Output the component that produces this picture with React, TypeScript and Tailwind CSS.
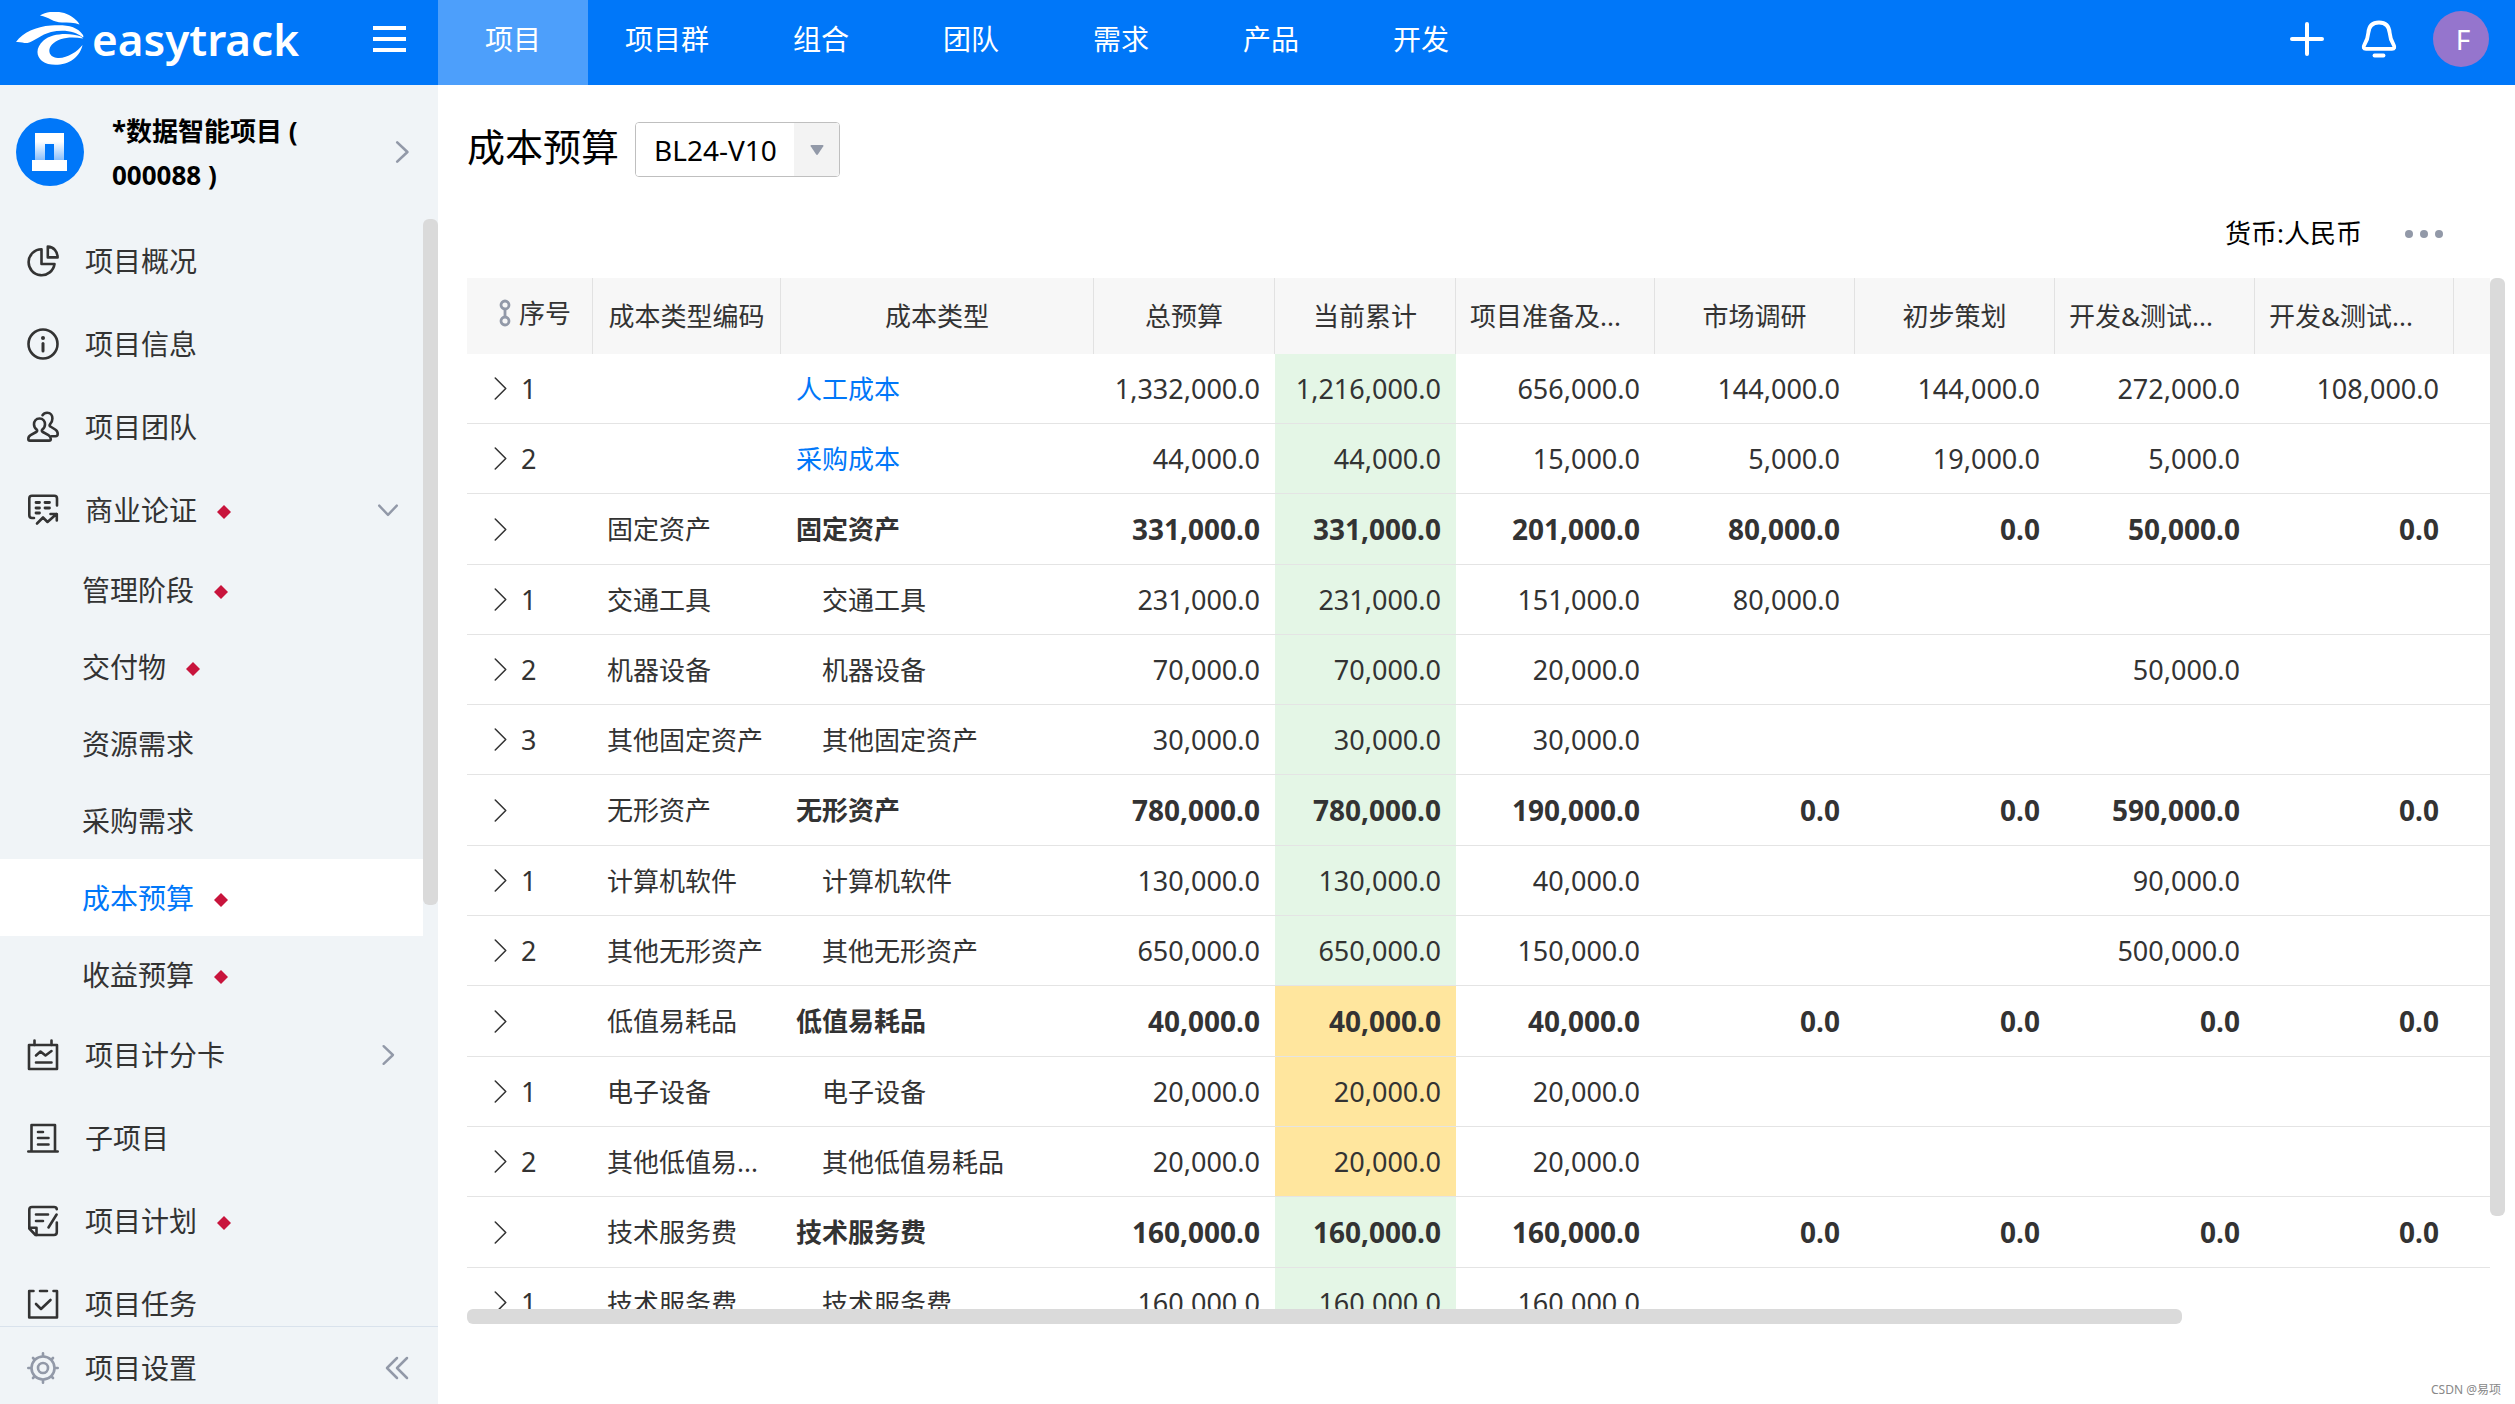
import { useId, type ReactNode } from "react";

const topTabs = ["项目", "项目群", "组合", "团队", "需求", "产品", "开发"];

type NavItem = {
  label: string;
  icon: ReactNode;
  mark?: boolean;
  chevron?: "down" | "right";
  children?: { label: string; mark?: boolean; active?: boolean }[];
};

function Icon({ children }: { children: ReactNode }) {
  return (
    <svg
      viewBox="0 0 32 32"
      className="size-8 shrink-0"
      fill="none"
      stroke="currentColor"
      strokeWidth="2.6"
      strokeLinecap="round"
      strokeLinejoin="round"
      aria-hidden="true"
    >
      {children}
    </svg>
  );
}

const icons = {
  pie: (
    <Icon>
      <path d="M14.500 4.200V19H27.500A13 13 0 1 1 14.500 4.200Z" />
      <path d="M20.800 1.600V12.400H30.600C30.600 6.500 26.600 1.600 20.800 1.600Z" />
    </Icon>
  ),
  info: (
    <Icon>
      <circle cx="16" cy="16" r="14.500" />
      <path d="M16 15.500V23" strokeWidth="3" />
      <circle cx="16" cy="10" r="2" fill="currentColor" stroke="none" />
    </Icon>
  ),
  team: (
    <Icon>
      <path d="M12.500 7.500C8.800 7.500 7 10.300 7 13.200C7 15.600 8 17.200 9.600 18.400C10.600 19.200 10.300 20.400 9.200 21L3.600 24.200C2 25.100 1.300 26.300 1.300 28C1.300 29 1.900 29.600 2.900 29.600H22.200C23.200 29.600 23.800 29 23.800 28C23.800 26.300 23 25.100 21.500 24.200L15.800 21C14.700 20.400 14.400 19.200 15.400 18.400C17 17.200 18 15.600 18 13.200C18 10.300 16.200 7.500 12.500 7.500Z" />
      <path d="M15.500 4.200C16.600 2.500 18.200 1.800 20.100 1.800C23.800 1.800 25.400 4.600 25.400 7.500C25.400 9.900 24.700 11.300 23.300 12.800C22.300 14 22.300 14.900 23.400 15.500L28.200 18.500C29.900 19.600 30.700 20.900 30.700 22.700C30.700 24.300 30 25.200 28.500 25.200H24.500" />
    </Icon>
  ),
  business: (
    <Icon>
      <path d="M30 11.500V4.500Q30 1.800 27.300 1.800H5Q2.300 1.800 2.300 4.500V21.300Q2.300 24 5 24H7" />
      <path d="M9 8.500H12.500M18 8.500H22.500M9 14H12.500M18 14H22.500M9 19H12.500" strokeWidth="2.800" />
      <path d="M10 29.500L16 23.500L20.500 28L29.500 20M23.500 20H29.800V26.500" />
    </Icon>
  ),
  score: (
    <Icon>
      <rect x="2" y="6" width="28" height="24" />
      <path d="M7.500 1.500V6M24.500 1.500V6M9 16.500L13.500 12.500L18.500 16.500L24.500 12M9 23.500H24.500" />
    </Icon>
  ),
  sub: (
    <Icon>
      <path d="M4.500 29V3H28V29M1.300 29.500H30.700" />
      <path d="M11 10H16M11 16H21.500M11 22.500H21.500" />
    </Icon>
  ),
  plan: (
    <Icon>
      <path d="M29.800 4.200Q29.500 2 27 2H5Q2.300 2 2.300 4.700V23.500L8.500 30H27Q29.800 30 29.800 27.300V17.500" />
      <path d="M2.300 22.800H9.500V30" />
      <path d="M9 9.500H21M9 16H16M29.600 9.500L21.500 22.500" />
    </Icon>
  ),
  task: (
    <Icon>
      <path d="M6.500 3H2.200V29.500H30V3H26.500M13 3H20" />
      <path d="M9 16L14 21L23.500 12" />
    </Icon>
  ),
};

const navItems: NavItem[] = [
  { label: "项目概况", icon: icons.pie },
  { label: "项目信息", icon: icons.info },
  { label: "项目团队", icon: icons.team },
  {
    label: "商业论证",
    icon: icons.business,
    mark: true,
    chevron: "down",
    children: [
      { label: "管理阶段", mark: true },
      { label: "交付物", mark: true },
      { label: "资源需求" },
      { label: "采购需求" },
      { label: "成本预算", mark: true, active: true },
      { label: "收益预算", mark: true },
    ],
  },
  { label: "项目计分卡", icon: icons.score, chevron: "right" },
  { label: "子项目", icon: icons.sub },
  { label: "项目计划", icon: icons.plan, mark: true },
  { label: "项目任务", icon: icons.task },
];

const columns = ["总预算", "当前累计", "项目准备及...", "市场调研", "初步策划", "开发&测试...", "开发&测试..."];

type Row = {
  kind: "link" | "group" | "item";
  no: string;
  code: string;
  name: string;
  tone?: "warn";
  values: string[];
};

const rows: Row[] = [
  { kind: "link", no: "1", code: "", name: "人工成本", values: ["1,332,000.0", "1,216,000.0", "656,000.0", "144,000.0", "144,000.0", "272,000.0", "108,000.0"] },
  { kind: "link", no: "2", code: "", name: "采购成本", values: ["44,000.0", "44,000.0", "15,000.0", "5,000.0", "19,000.0", "5,000.0", ""] },
  { kind: "group", no: "", code: "固定资产", name: "固定资产", values: ["331,000.0", "331,000.0", "201,000.0", "80,000.0", "0.0", "50,000.0", "0.0"] },
  { kind: "item", no: "1", code: "交通工具", name: "交通工具", values: ["231,000.0", "231,000.0", "151,000.0", "80,000.0", "", "", ""] },
  { kind: "item", no: "2", code: "机器设备", name: "机器设备", values: ["70,000.0", "70,000.0", "20,000.0", "", "", "50,000.0", ""] },
  { kind: "item", no: "3", code: "其他固定资产", name: "其他固定资产", values: ["30,000.0", "30,000.0", "30,000.0", "", "", "", ""] },
  { kind: "group", no: "", code: "无形资产", name: "无形资产", values: ["780,000.0", "780,000.0", "190,000.0", "0.0", "0.0", "590,000.0", "0.0"] },
  { kind: "item", no: "1", code: "计算机软件", name: "计算机软件", values: ["130,000.0", "130,000.0", "40,000.0", "", "", "90,000.0", ""] },
  { kind: "item", no: "2", code: "其他无形资产", name: "其他无形资产", values: ["650,000.0", "650,000.0", "150,000.0", "", "", "500,000.0", ""] },
  { kind: "group", no: "", code: "低值易耗品", name: "低值易耗品", tone: "warn", values: ["40,000.0", "40,000.0", "40,000.0", "0.0", "0.0", "0.0", "0.0"] },
  { kind: "item", no: "1", code: "电子设备", name: "电子设备", tone: "warn", values: ["20,000.0", "20,000.0", "20,000.0", "", "", "", ""] },
  { kind: "item", no: "2", code: "其他低值易...", name: "其他低值易耗品", tone: "warn", values: ["20,000.0", "20,000.0", "20,000.0", "", "", "", ""] },
  { kind: "group", no: "", code: "技术服务费", name: "技术服务费", values: ["160,000.0", "160,000.0", "160,000.0", "0.0", "0.0", "0.0", "0.0"] },
  { kind: "item", no: "1", code: "技术服务费", name: "技术服务费", values: ["160,000.0", "160,000.0", "160,000.0", "", "", "", ""] },
];

function Diamond() {
  return (
    <svg viewBox="0 0 14 14" className="mt-1 ml-5 size-3.5 shrink-0" aria-hidden="true">
      <path d="M7 0L14 7L7 14L0 7Z" fill="#c8143c" />
    </svg>
  );
}

function Chevron({ dir, className }: { dir: "down" | "right" | "row"; className: string }) {
  const d = { down: "M2 6L10 14.500L18 6", right: "M6 2L14.500 10L6 18", row: "M5 0L15 10L5 20" }[dir];
  return (
    <svg
      viewBox="0 0 20 20"
      className={className}
      fill="none"
      stroke="currentColor"
      strokeWidth={dir === "row" ? 1.5 : 2.2}
      strokeLinecap="round"
      strokeLinejoin="round"
      overflow="visible"
      aria-hidden="true"
    >
      <path d={d} />
    </svg>
  );
}

function Logo() {
  return (
    <a href="#home" aria-label="easytrack" className="flex items-center gap-2 text-white">
      <svg viewBox="0 0 68 54" className="h-[54px] w-[68px]" fill="currentColor" aria-hidden="true">
        <path d="M24 3.500C32 -1.500 44 -1.500 53 3C59 6.500 62 9.500 63.500 12.500C58 10.500 52 10.500 46 10.500C37 10.500 33 5 24 3.500Z" />
        <path d="M0 30C7 20.500 20 14.500 35 13.500C50 12.500 61 14 67 23C67.500 24.500 67.500 25 67 25.500C60 19 47 17 35 20C25 22.500 18 29.500 11.500 31C8 31.500 5 29.500 0 30Z" />
        <path d="M65 24.500C54 20.500 36 21 27.500 28.500C20 35 19.500 44 26 49C34 55 49 53.500 57 47.500C62.500 43.500 65.500 38 66.500 33C61.500 39.500 51 46.500 42 46C33 45.500 31 38 36 32.500C42 26 54 24 67 26.500Z" />
      </svg>
      <span className="font-['Noto_Sans'] text-[44px] leading-[50px] font-semibold">easytrack</span>
    </a>
  );
}

function TopBar() {
  return (
    <header className="flex h-[85px] shrink-0 bg-[#0077f9] text-white">
      <div className="flex w-[438px] shrink-0 items-center justify-between pr-8 pb-2 pl-4">
        <Logo />
        <button type="button" aria-label="菜单" className="flex w-[33px] flex-col gap-[7px]">
          <span className="h-1 w-full bg-white" />
          <span className="h-1 w-full bg-white" />
          <span className="h-1 w-full bg-white" />
        </button>
      </div>
      <nav className="flex flex-1">
        {topTabs.map((t, i) => (
          <a
            key={t}
            href={`#tab-${i}`}
            className={`flex min-w-[150px] items-center justify-center px-[37px] pb-2 text-[28px] ${i === 0 ? "bg-[#4d9ffb]" : ""}`}
          >
            {t}
          </a>
        ))}
      </nav>
      <div className="flex items-center pr-[26px] pb-2">
        <button type="button" aria-label="新建" className="mr-9">
          <svg viewBox="0 0 36 36" className="size-9" stroke="currentColor" strokeWidth="4" strokeLinecap="round" aria-hidden="true">
            <path d="M18 3V33M3 18H33" />
          </svg>
        </button>
        <button type="button" aria-label="通知" className="mr-9">
          <svg viewBox="0 0 36 38" className="h-[38px] w-9" fill="none" stroke="currentColor" strokeWidth="3.800" strokeLinejoin="round" strokeLinecap="round" aria-hidden="true">
            <path d="M18 2.500C11.500 2.500 7.800 6.500 7.300 13C6.900 18.500 5.500 21.500 3.300 25C2 27.200 2.600 28.800 5 28.800H31C33.400 28.800 34 27.200 32.700 25C30.500 21.500 29.100 18.500 28.700 13C28.200 6.500 24.500 2.500 18 2.500Z" />
            <path d="M13.500 35.500H22.500" />
          </svg>
        </button>
        <button type="button" className="size-14 rounded-full bg-[#9575cd] pl-1 font-['Noto_Sans'] text-[28px] leading-[54px]">
          F
        </button>
      </div>
    </header>
  );
}

function Sidebar() {
  const gradient = useId();
  return (
    <aside className="flex w-[438px] shrink-0 flex-col bg-[#f0f4f7] text-[28px] text-[#333]">
      <a href="#project" className="flex h-[134px] shrink-0 items-center pr-6 pl-4 text-black">
        <svg viewBox="0 0 68 68" className="size-[68px] shrink-0" aria-hidden="true">
          <defs>
            <linearGradient id={gradient} x1="0" y1="0" x2="0" y2="1">
              <stop offset="0.3" stopColor="#fff" />
              <stop offset="1" stopColor="#7db8fc" />
            </linearGradient>
          </defs>
          <circle cx="34" cy="34" r="34" fill="#0077f9" />
          <path d="M19 15H48V44H38V26H29V44H19Z" fill={`url(#${gradient})`} />
          <rect x="16" y="42" width="35" height="11" fill="#fff" />
        </svg>
        <span className="ml-7 w-60 pt-0.5 text-[26px] leading-11 font-bold">*数据智能项目 ( 000088 )</span>
        <Chevron dir="right" className="ml-auto size-6 text-[#9299a8]" />
      </a>
      <div className="flex min-h-0 flex-1">
        <nav className="flex-1 overflow-hidden">
          {navItems.map((item) => (
            <div key={item.label}>
              <a href={`#${item.label}`} className="flex h-[83px] items-center pr-6 pl-[27px]">
                {item.icon}
                <span className="ml-[26px]">{item.label}</span>
                {item.mark && <Diamond />}
                {item.chevron && <Chevron dir={item.chevron} className="ml-auto size-[22px] text-[#9299a8]" />}
              </a>
              {item.children?.map((c) => (
                <a
                  key={c.label}
                  href={`#${c.label}`}
                  className={`flex h-[77px] items-center pl-[82px] ${c.active ? "bg-white text-[#0077f9]" : ""}`}
                >
                  {c.label}
                  {c.mark && <Diamond />}
                </a>
              ))}
            </div>
          ))}
        </nav>
        <div className="w-[15px]">
          <div className="h-[62%] rounded-md bg-[#dadada]" />
        </div>
      </div>
      <div className="flex h-[78px] shrink-0 items-center border-t border-[#d9e2ec] pt-1 pr-[29px] pl-[27px] text-[#9299a8]">
        <a href="#settings" className="flex items-center">
          <Icon>
            <circle cx="16" cy="16" r="11.500" />
            <circle cx="16" cy="16" r="5" />
            <path d="M16 1.300V4M16 28V30.700M1.300 16H4M28 16H30.700M6 6L7.500 7.500M24.500 24.500L26 26M6 26L7.500 24.500M24.500 7.500L26 6" />
          </Icon>
          <span className="ml-[26px] text-[#333]">项目设置</span>
        </a>
        <button type="button" aria-label="收起" className="ml-auto">
          <svg viewBox="0 0 24 24" className="size-6" fill="none" stroke="currentColor" strokeWidth="2.500" strokeLinecap="round" strokeLinejoin="round" aria-hidden="true">
            <path d="M12 2L2 12L12 22M22 2L12 12L22 22" />
          </svg>
        </button>
      </div>
    </aside>
  );
}

function BudgetTable() {
  return (
    <table className="w-full table-fixed border-separate border-spacing-0 text-[26px] leading-9 whitespace-nowrap text-[#333]">
      <colgroup>
        <col className="w-[126px]" />
        <col className="w-[188px]" />
        <col className="w-[313px]" />
        <col className="w-[181px]" />
        <col className="w-[181px]" />
        <col className="w-[199px]" />
        <col className="w-[200px]" />
        <col className="w-[200px]" />
        <col className="w-[200px]" />
        <col className="w-[199px]" />
        <col />
      </colgroup>
      <thead>
        <tr className="h-[76px] bg-[#f7f7f7]">
          <th className="border-r border-[#e2e2e2] p-0 font-normal">
            <div className="flex items-center pb-1.5 pl-8">
              <svg viewBox="0 0 12 28" className="mr-2 h-7 w-3" fill="none" stroke="#9299a8" strokeWidth="2.800" aria-hidden="true">
                <circle cx="6" cy="6" r="4" />
                <circle cx="6" cy="22" r="4" />
                <path d="M6 10V18" />
              </svg>
              序号
            </div>
          </th>
          <th className="border-r border-[#e2e2e2] p-0 font-normal">成本类型编码</th>
          <th className="border-r border-[#e2e2e2] p-0 font-normal">成本类型</th>
          {columns.map((c, i) => (
            <th
              key={i}
              className={`border-r border-[#e2e2e2] px-3.5 py-0 font-normal ${c.endsWith("...") ? "text-left" : "text-center"}`}
            >
              {c}
            </th>
          ))}
          <th className="p-0" />
        </tr>
      </thead>
      <tbody>
        {rows.map((r, i) => {
          const group = r.kind === "group";
          return (
            <tr key={i} className={group ? "h-[71px]" : "h-[70px]"}>
              <td className="border-b border-[#e4e4e4] p-0">
                <button type="button" aria-label="展开" className="flex items-center pl-[23px]">
                  <Chevron dir="row" className="mr-2.5 size-[21px]" />
                  <span className="font-['Noto_Sans'] text-[27px]">{r.no}</span>
                </button>
              </td>
              <td className="border-b border-[#e4e4e4] py-0 pr-0 pl-3.5">{r.code}</td>
              <td
                className={`border-b border-[#e4e4e4] py-0 pr-0 ${r.kind === "item" ? "pl-[41px]" : "pl-[15px]"} ${group ? "font-bold" : ""}`}
              >
                {r.kind === "link" ? (
                  <a href={`#${r.name}`} className="text-[#0077f9]">
                    {r.name}
                  </a>
                ) : (
                  r.name
                )}
              </td>
              {r.values.map((v, j) => (
                <td
                  key={j}
                  className={`border-b border-[#e4e4e4] py-0 pr-[15px] pl-0 text-right font-['Noto_Sans'] ${group ? "text-[28px] font-bold" : "text-[27px]"} ${j === 1 ? (r.tone === "warn" ? "bg-[#ffe69e]" : "bg-[#e4f6e6]") : ""}`}
                >
                  {v}
                </td>
              ))}
              <td className="border-b border-[#e4e4e4] p-0" />
            </tr>
          );
        })}
      </tbody>
    </table>
  );
}

export default function App() {
  return (
    <div className="flex h-screen flex-col overflow-hidden bg-white font-['Noto_Sans','Noto_Sans_CJK_SC',sans-serif]">
      <TopBar />
      <div className="flex min-h-0 flex-1">
        <Sidebar />
        <main className="flex min-w-0 flex-1 flex-col pr-2.5 pl-[29px]">
          <div className="flex items-center pt-[37px]">
            <h1 className="pb-1.5 text-[38px] leading-[49px] text-black">成本预算</h1>
            <div className="relative ml-4 h-[55px] w-[205px] overflow-hidden rounded border border-[#bfbfbf]">
              <select aria-label="预算版本" className="h-full w-full appearance-none bg-white pl-[18px] text-[28px] text-black">
                <option>BL24-V10</option>
              </select>
              <div className="pointer-events-none absolute inset-y-0 right-0 flex w-[45px] items-center justify-center bg-[#f3f3f3]">
                <svg viewBox="0 0 14 10" className="h-2.5 w-3.5" fill="#9299a8" aria-hidden="true">
                  <path d="M1.500 0H12.500Q14 0 13.300 1.300L8 9.300Q7 10.500 6 9.300L0.700 1.300Q0 0 1.500 0Z" />
                </svg>
              </div>
            </div>
          </div>
          <div className="flex h-[101px] items-center justify-end pt-3 pr-[62px]">
            <span className="text-[26px] text-black">货币:人民币</span>
            <button type="button" aria-label="更多" className="ml-[43px] flex gap-[7px]">
              <span className="size-2 rounded-full bg-[#9299a8]" />
              <span className="size-2 rounded-full bg-[#9299a8]" />
              <span className="size-2 rounded-full bg-[#9299a8]" />
            </button>
          </div>
          <div className="flex min-h-0 flex-1">
            <div className="min-w-0 flex-1 overflow-hidden">
              <BudgetTable />
            </div>
            <div className="w-[15px] shrink-0">
              <div className="h-[91%] rounded-md bg-[#dadada]" />
            </div>
          </div>
          <div className="mr-5 h-[15px] shrink-0">
            <div className="h-full w-[85%] rounded-md bg-[#dadada]" />
          </div>
          <footer className="flex h-20 shrink-0 items-end justify-end pr-1 pb-1.5 text-xs text-[#888]">CSDN @易项</footer>
        </main>
      </div>
    </div>
  );
}
